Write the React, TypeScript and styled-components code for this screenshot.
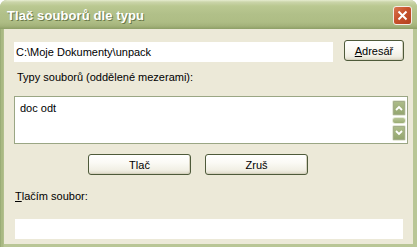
import React from "react";
import styled, { createGlobalStyle } from "styled-components";

const Global = createGlobalStyle`
  html, body { margin: 0; padding: 0; background: #ffffff; }
  body { font-family: "Liberation Sans", Arial, sans-serif; }
`;

const Window = styled.div`
  width: 417px;
  height: 247px;
  box-sizing: border-box;
  display: flex;
  flex-direction: column;
  background: #a6b67f;
  border-radius: 7px 7px 0 0;
  overflow: hidden;
`;

const TitleBar = styled.div`
  height: 29px;
  flex: 0 0 29px;
  box-sizing: border-box;
  display: flex;
  align-items: center;
  justify-content: space-between;
  padding: 0 5px 0 7px;
  background: linear-gradient(
    to bottom,
    #e6ecd0 0px,
    #cbd5aa 2px,
    #bac891 6px,
    #b1c089 14px,
    #aebd85 22px,
    #a3b27a 26px,
    #8d9e66 29px
  );
`;

const Title = styled.span`
  font-family: "Liberation Sans", Arial, sans-serif;
  font-weight: bold;
  font-size: 13px;
  color: #ffffff;
  text-shadow: 1px 1px 0 #6b7a4a;
  letter-spacing: 0.1px;
  padding-top: 1px;
`;

const CloseButton = styled.div`
  width: 19px;
  height: 19px;
  box-sizing: border-box;
  border: 1px solid #f3ece6;
  border-radius: 3px;
  background: linear-gradient(135deg, #d9764f 0%, #c7512b 45%, #b3431f 100%);
  display: flex;
  align-items: center;
  justify-content: center;
  margin-top: 1px;
`;

const Frame = styled.div`
  flex: 1;
  display: flex;
  padding: 0 4px 3px 4px;
  background: linear-gradient(to right, #8ba06a 0, #a9b983 1px, #a9b983 3px, #b9c696 4px);
`;

const Body = styled.div`
  flex: 1;
  background: #ece9d8;
  display: flex;
  flex-direction: column;
  padding: 11px 0 0 10px;
  font-size: 11px;
  color: #000;
`;

const PathRow = styled.div`
  display: flex;
  align-items: flex-start;
  gap: 11px;
`;

const WhiteField = styled.div<{ $width: number }>`
  width: ${(p) => p.$width}px;
  height: 20px;
  box-sizing: border-box;
  background: #ffffff;
  display: flex;
  align-items: center;
  padding-left: 2px;
  font-size: 11px;
  line-height: 13px;
`;

const PathField = styled(WhiteField)`
  margin-top: 2px;
`;

const XPButton = styled.div<{ $width: number }>`
  width: ${(p) => p.$width}px;
  height: 21px;
  box-sizing: border-box;
  border: 1px solid #4e5a3a;
  border-radius: 3px;
  background: linear-gradient(to bottom, #ffffff 0%, #fbfaf5 40%, #f1efe4 80%, #dedbc9 100%);
  box-shadow: inset -1px -1px 0 #d6d2bf;
  display: flex;
  align-items: center;
  justify-content: center;
  font-size: 11px;
  color: #000;
`;

const Label = styled.div<{ $top: number; $left: number }>`
  margin-top: ${(p) => p.$top}px;
  margin-left: ${(p) => p.$left}px;
  font-size: 11px;
  line-height: 13px;
  height: 13px;
`;

const TextArea = styled.div`
  margin-top: 12px;
  width: 394px;
  height: 48px;
  box-sizing: border-box;
  border: 1px solid #9aa684;
  background: #ffffff;
  display: flex;
  justify-content: space-between;
`;

const AreaText = styled.div`
  padding: 5px 0 0 5px;
  font-size: 11px;
  line-height: 13px;
`;

const ScrollBar = styled.div`
  width: 14px;
  margin: 3px 1px 0 0;
  display: flex;
  flex-direction: column;
  align-items: center;
  gap: 1px;
`;

const ScrollBtn = styled.div`
  width: 14px;
  height: 16px;
  box-sizing: border-box;
  border: 1px solid #e6ead8;
  outline: 1px solid #a3ad8a;
  outline-offset: -2px;
  border-radius: 2px;
  background: linear-gradient(to bottom, #aebd8a, #93a56e);
  display: flex;
  align-items: center;
  justify-content: center;
`;

const Thumb = styled.div`
  width: 14px;
  height: 7px;
  box-sizing: border-box;
  border: 1px solid #e6ead8;
  border-radius: 3px;
  background: linear-gradient(to bottom, #b8c597, #9bad74);
`;

const ButtonRow = styled.div`
  margin-top: 10px;
  margin-left: 74px;
  display: flex;
  gap: 14px;
`;

const BottomField = styled(WhiteField)`
  margin-top: 16px;
  margin-left: 1px;
`;

const U = styled.span`
  text-decoration: underline;
`;

const Arrow = ({ up }: { up?: boolean }) => (
  <svg width="8" height="6" viewBox="0 0 8 6">
    <path
      d={up ? "M1 5 L4 2 L7 5" : "M1 1 L4 4 L7 1"}
      stroke="#ffffff"
      strokeWidth="1.8"
      fill="none"
    />
  </svg>
);

export default function App() {
  return (
    <>
      <Global />
      <Window>
        <TitleBar>
          <Title>Tlač souborů dle typu</Title>
          <CloseButton>
            <svg width="11" height="11" viewBox="0 0 11 11">
              <path d="M1.5 1.5 L9.5 9.5 M9.5 1.5 L1.5 9.5" stroke="#ffffff" strokeWidth="2" />
            </svg>
          </CloseButton>
        </TitleBar>
        <Frame>
          <Body>
            <PathRow>
              <PathField $width={319}>C:\Moje Dokumenty\unpack</PathField>
              <XPButton $width={60}>
                <span>
                  <U>A</U>dresář
                </span>
              </XPButton>
            </PathRow>
            <Label $top={9} $left={3}>
              Typy souborů (oddělené mezerami):
            </Label>
            <TextArea>
              <AreaText>doc odt</AreaText>
              <ScrollBar>
                <ScrollBtn>
                  <Arrow up />
                </ScrollBtn>
                <Thumb />
                <ScrollBtn>
                  <Arrow />
                </ScrollBtn>
              </ScrollBar>
            </TextArea>
            <ButtonRow>
              <XPButton $width={103}>Tlač</XPButton>
              <XPButton $width={103}>Zruš</XPButton>
            </ButtonRow>
            <Label $top={15} $left={1}>
              <U>T</U>lačím soubor:
            </Label>
            <BottomField $width={388} />
          </Body>
        </Frame>
      </Window>
    </>
  );
}
